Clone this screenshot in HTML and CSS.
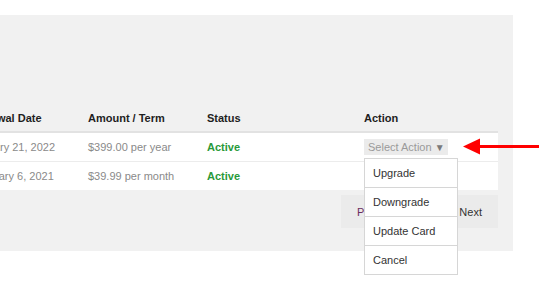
FILE: index.html
```html
<!DOCTYPE html>
<html lang="en">
<head>
    <meta charset="UTF-8">
    <meta name="viewport" content="width=device-width, initial-scale=1.0">
    <title>Subscriptions</title>
    <link rel="stylesheet" href="styles.css">
</head>
<body>
    <div class="panel">
        <table class="subs-table">
            <colgroup>
                <col class="col-date">
                <col class="col-amount">
                <col class="col-status">
                <col class="col-action">
            </colgroup>
            <thead>
                <tr>
                    <th>Renewal Date</th>
                    <th>Amount / Term</th>
                    <th>Status</th>
                    <th>Action</th>
                </tr>
            </thead>
            <tbody>
                <tr>
                    <td>January 21, 2022</td>
                    <td>$399.00 per year</td>
                    <td class="status">Active</td>
                    <td>
                        <div class="action-select">
                            <span class="select-btn">Select Action <span class="caret">&#9660;</span></span>
                            <ul class="dropdown">
                                <li>Upgrade</li>
                                <li>Downgrade</li>
                                <li>Update Card</li>
                                <li>Cancel</li>
                            </ul>
                            <!-- annotation arrow -->
                            <svg class="pointer" width="77" height="17" viewBox="0 0 77 17">
                                <polygon points="0,8.5 17,0.5 17,16.5" fill="#f00"/>
                                <rect x="14" y="7" width="62" height="3" fill="#f00"/>
                            </svg>
                        </div>
                    </td>
                </tr>
                <tr>
                    <td>February 6, 2021</td>
                    <td>$39.99 per month</td>
                    <td class="status">Active</td>
                    <td></td>
                </tr>
            </tbody>
        </table>

        <div class="pager-row">
            <div class="pager">
                <span class="prev">Previous</span>
                <span>1</span>
                <span>Next</span>
            </div>
        </div>
    </div>
</body>
</html>
```

FILE: styles.css
```css
* {
    margin: 0;
    padding: 0;
    box-sizing: border-box;
}

html,
body {
    min-height: 299px;
}

body {
    font-family: "Liberation Sans", Arial, sans-serif;
    font-size: 11px;
    color: #333;
    background: #fff;
    padding-top: 15px;
}

.panel {
    margin-left: -53px;
    width: 566px;
    height: 236px;
    background: #f1f1f1;
    padding: 89px 15px 0 15px;
}

.subs-table {
    width: 536px;
    border-collapse: separate;
    border-spacing: 0;
    table-layout: fixed;
}

.col-date { width: 118px; }
.col-amount { width: 119px; }
.col-status { width: 157px; }
.col-action { width: 142px; }

.subs-table th {
    text-align: left;
    font-weight: bold;
    color: #1e1e1e;
    height: 29px;
    padding: 0 8px;
    border-bottom: 2px solid #e2e2e2;
}

.subs-table td {
    background: #fff;
    color: #8a8a8a;
    height: 29px;
    padding: 0 8px;
    border-bottom: 1px solid #ececec;
    white-space: nowrap;
}

.subs-table tbody tr:last-child td {
    height: 28px;
    border-bottom: none;
}

.subs-table td.status {
    color: #2a9a3a;
    font-weight: bold;
}

.action-select {
    position: relative;
    display: inline-block;
    vertical-align: middle;
}

.select-btn {
    display: block;
    background: #ebebeb;
    color: #9a9a9a;
    height: 16px;
    line-height: 16px;
    width: 84px;
    padding-left: 4px;
}

.caret {
    color: #7a7a7a;
    font-size: 10px;
}

.dropdown {
    position: absolute;
    top: 19px;
    left: 0;
    width: 94px;
    list-style: none;
    background: #fff;
    border: 1px solid #d6d6d6;
    z-index: 2;
}

.dropdown li {
    height: 29px;
    line-height: 28px;
    padding-left: 8px;
    color: #333;
    border-bottom: 1px solid #d6d6d6;
}

.dropdown li:last-child {
    border-bottom: none;
    height: 28px;
}

.pointer {
    position: absolute;
    left: 99px;
    top: -1px;
}

.pager-row {
    display: flex;
    justify-content: flex-end;
    margin-top: 5px;
}

.pager {
    width: 157px;
    height: 33px;
    background: #ebebeb;
    display: flex;
    align-items: center;
    justify-content: space-between;
    padding: 0 16px;
    color: #333;
}

.pager .prev {
    color: #6a2d5e;
}
```
